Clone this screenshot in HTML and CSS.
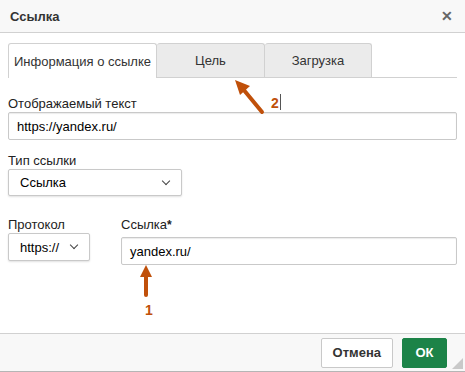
FILE: index.html
```html
<!DOCTYPE html>
<html lang="ru">

<head>
    <title>Ссылка</title>
    <meta charset="utf-8">
    <link rel="stylesheet" href="styles.css">
</head>

<body>
    <div class="link_dialog">
        <div class="link_titlebar">
            <span class="link_title">Ссылка</span>
            <span class="link_close">&#x2715;</span>
        </div>
        <div class="link_body">
            <div class="link_tabs">
                <div class="link_tab link_tab-active">Информация о ссылке</div>
                <div class="link_tab link_tab-target">Цель</div>
                <div class="link_tab link_tab-upload">Загрузка</div>
            </div>
            <div class="link_panel">
                <div class="link_field">
                    <label>Отображаемый текст</label>
                    <div class="link_input">https://yandex.ru/</div>
                </div>
                <div class="link_field">
                    <label>Тип ссылки</label>
                    <div class="link_select link_select-type">Ссылка <span class="link_chevron"></span></div>
                </div>
                <div class="link_row">
                    <div class="link_field link_field-protocol">
                        <label>Протокол</label>
                        <div class="link_select link_select-protocol">https:// <span class="link_chevron"></span></div>
                    </div>
                    <div class="link_field link_field-url">
                        <label>Ссылка<b>*</b></label>
                        <div class="link_input">yandex.ru/</div>
                    </div>
                </div>
            </div>
        </div>
        <div class="link_footer">
            <button class="link_btn">Отмена</button>
            <button class="link_btn link_btn-ok">ОК</button>
            <span class="link_resize"></span>
        </div>

        <svg class="link_marks" width="465" height="372" viewBox="0 0 465 372">
            <line x1="262" y1="112" x2="243" y2="89" stroke="#c0500a" stroke-width="4" stroke-linecap="round"/>
            <polygon points="235,80 250,86 240,95" fill="#c0500a"/>
            <line x1="146" y1="295" x2="146" y2="276" stroke="#c0500a" stroke-width="4" stroke-linecap="round"/>
            <polygon points="146,265 152,277 140,277" fill="#c0500a"/>
            <text x="149" y="315" class="link_mark-num" text-anchor="middle">1</text>
            <text x="275" y="108" class="link_mark-num" text-anchor="middle">2</text>
            <line x1="280.5" y1="94" x2="280.5" y2="110" stroke="#555" stroke-width="1"/>
        </svg>
    </div>
</body>

</html>
```

FILE: styles.css
```css
body {
    margin: 0;
    font-family: "Liberation Sans", Arial, sans-serif;
    font-size: 13px;
    color: #222;
}

.link_dialog {
    position: relative;
    width: 465px;
    height: 372px;
    display: flex;
    flex-direction: column;
    background: #fff;
}

.link_titlebar {
    height: 33px;
    box-sizing: border-box;
    display: flex;
    align-items: center;
    justify-content: space-between;
    padding: 0 10px;
    background: #f8f8f8;
    border-bottom: 1px solid #d1d1d1;
}

.link_title {
    font-weight: bold;
    font-size: 13px;
    color: #333;
}

.link_close {
    font-size: 14px;
    font-weight: bold;
    color: #666;
    margin-right: 2px;
}

.link_body {
    flex: 1;
    padding: 10px 8px 0;
}

.link_tabs {
    display: flex;
    height: 34px;
    border-bottom: 1px solid #d1d1d1;
}

.link_tab {
    box-sizing: border-box;
    display: flex;
    align-items: center;
    justify-content: center;
    height: 34px;
    background: #ebebeb;
    border: 1px solid #d1d1d1;
    border-bottom: none;
    border-radius: 3px 3px 0 0;
    color: #333;
}

.link_tab-active {
    width: 149px;
    background: #fff;
    height: 35px;
    position: relative;
    z-index: 1;
}

.link_tab-target {
    width: 108px;
    border-left: none;
}

.link_tab-upload {
    width: 107px;
    border-left: none;
}

.link_panel {
    padding-top: 18px;
}

.link_field {
    display: flex;
    flex-direction: column;
    margin-bottom: 13px;
}

.link_field label {
    line-height: 15px;
    margin-bottom: 1px;
    color: #222;
}

.link_field label b {
    font-size: 12px;
}

.link_input,
.link_select {
    box-sizing: border-box;
    height: 28px;
    display: flex;
    align-items: center;
    border: 1px solid #c9c9c9;
    border-radius: 2px;
    background: #fff;
    color: #000;
}

.link_input {
    padding: 0 8px;
    box-shadow: inset 0 1px 1px rgba(0, 0, 0, 0.08);
}

.link_select {
    padding: 0 10px 0 11px;
    justify-content: space-between;
    box-shadow: 0 1px 2px rgba(0, 0, 0, 0.12);
}

.link_select-type {
    width: 174px;
    height: 27px;
}

.link_select-protocol {
    width: 82px;
}

.link_chevron {
    width: 5px;
    height: 5px;
    border-right: 1px solid #444;
    border-bottom: 1px solid #444;
    transform: rotate(45deg);
    margin: -4px 2px 0 0;
}

.link_row {
    display: flex;
    gap: 31px;
    margin-top: 21px;
}

.link_field-url {
    flex: 1;
}

.link_field-url .link_input {
    margin-top: 3px;
}

.link_footer {
    height: 39px;
    box-sizing: border-box;
    display: flex;
    align-items: center;
    justify-content: flex-end;
    gap: 9px;
    padding: 0 18px 0 0;
    background: #f8f8f8;
    border-top: 1px solid #d1d1d1;
    border-bottom: 1px solid #b5b5b5;
    position: relative;
}

.link_btn {
    height: 30px;
    padding: 0 11px;
    font-family: "Liberation Sans", Arial, sans-serif;
    font-size: 13px;
    font-weight: bold;
    color: #333;
    background: #fff;
    border: 1px solid #c9c9c9;
    border-radius: 2px;
}

.link_btn-ok {
    width: 45px;
    padding: 0;
    color: #fff;
    background: #1c8348;
    border-color: #1c8348;
}

.link_resize {
    position: absolute;
    right: 2px;
    bottom: 2px;
    width: 0;
    height: 0;
    border-left: 11px solid transparent;
    border-bottom: 11px solid #c9c9c9;
}

.link_marks {
    position: absolute;
    left: 0;
    top: 0;
    pointer-events: none;
}

.link_mark-num {
    font-family: "Liberation Sans", Arial, sans-serif;
    font-size: 14px;
    font-weight: bold;
    fill: #c0500a;
}
```
